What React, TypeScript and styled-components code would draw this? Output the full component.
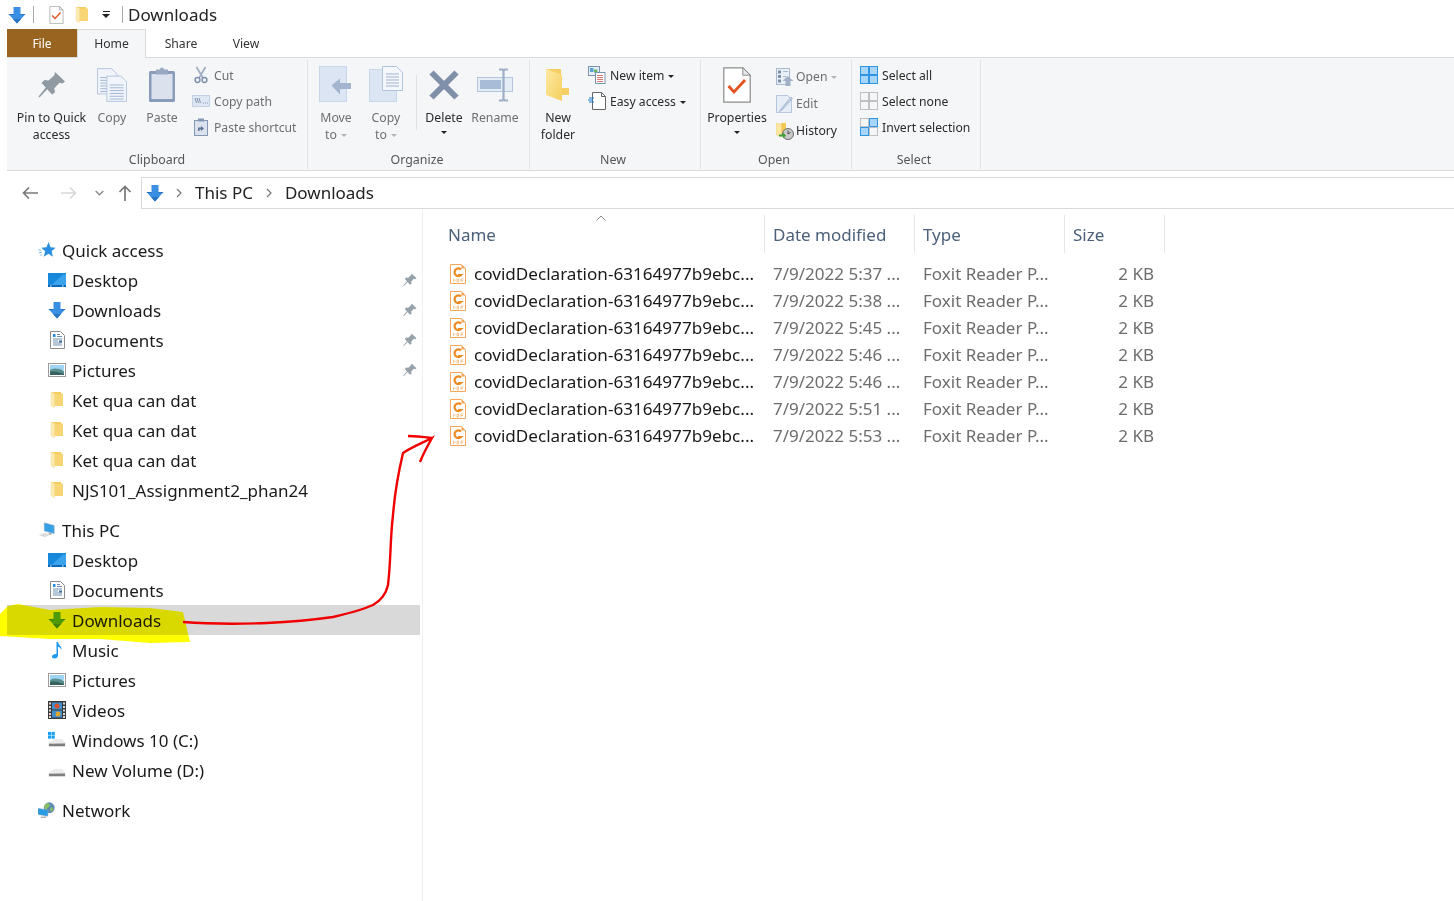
import React, { useId } from "react";
import styled, { createGlobalStyle } from "styled-components";

const GlobalStyle = createGlobalStyle`
  html, body {
    margin: 0;
    padding: 0;
    height: 100%;
    overflow: hidden;
    background: #fff;
  }
  body {
    font-family: "Noto Sans", "Open Sans", "Liberation Sans", sans-serif;
    color: #1a1a1a;
  }
`;

const Window = styled.div`
  position: relative;
  width: 1454px;
  height: 901px;
  padding-left: 7px;
  box-sizing: border-box;
  overflow: hidden;
  background: #fff;
`;

/* title bar */
const TitleBar = styled.div`
  height: 29px;
  display: flex;
  align-items: center;
  padding-left: 1px;
`;
const TitleSep = styled.span<{ $ml: number }>`
  width: 1px;
  height: 17px;
  margin-left: ${(p) => p.$ml}px;
  background: #a8a8a8;
`;
const TitleIcon = styled.span<{ $ml: number }>`
  display: flex;
  margin-left: ${(p) => p.$ml}px;
`;
const TitleText = styled.span`
  margin-left: 5px;
  font-size: 17px;
  color: #222;
`;
const QuickCaret = styled.span`
  display: flex;
  flex-direction: column;
  align-items: center;
  gap: 2px;
  margin-left: 13px;
  &::before {
    content: "";
    width: 7px;
    height: 1px;
    background: #222;
  }
  &::after {
    content: "";
    border-left: 4px solid transparent;
    border-right: 4px solid transparent;
    border-top: 4px solid #222;
  }
`;

/* tabs */
const TabStrip = styled.div`
  height: 28px;
  display: flex;
  border-bottom: 1px solid #dadbdc;
`;
const FileTab = styled.div`
  width: 70px;
  display: flex;
  align-items: center;
  justify-content: center;
  background: #99641f;
  color: #fff;
  font-size: 12px;
`;
const Tab = styled.div<{ $active?: boolean; $width: number }>`
  width: ${(p) => p.$width}px;
  height: ${(p) => (p.$active ? 29 : 28)}px;
  display: flex;
  align-items: center;
  justify-content: center;
  box-sizing: border-box;
  font-size: 12.2px;
  color: #333;
  background: #fff;
  ${(p) =>
    p.$active &&
    `border: 1px solid #dadbdc; border-bottom: none; background: #f5f6f7; padding-bottom: 2px;`}
`;

/* ribbon */
const Ribbon = styled.div`
  height: 112px;
  display: flex;
  background: #f5f6f7;
  border-bottom: 1px solid #dadbdc;
`;
const RibbonGroup = styled.div<{ $width: number }>`
  width: ${(p) => p.$width}px;
  display: flex;
  flex-direction: column;
  box-sizing: border-box;
  margin: 2px 0 1px;
  border-right: 1px solid #e2e3e5;
`;
const GroupBody = styled.div<{ $pl: number }>`
  flex: 1;
  display: flex;
  padding: 1px 0 0 ${(p) => p.$pl}px;
`;
const GroupLabel = styled.div<{ $pr?: number }>`
  height: 21px;
  box-sizing: border-box;
  padding: 2px ${(p) => p.$pr ?? 0}px 0 0;
  line-height: 20px;
  text-align: center;
  font-size: 12.4px;
  color: #555;
`;
const LargeButton = styled.div<{ $width: number; $disabled?: boolean }>`
  width: ${(p) => p.$width}px;
  display: flex;
  flex-direction: column;
  align-items: center;
  color: ${(p) => (p.$disabled ? "#6f6f6f" : "#2b2b2b")};
`;
const LargeIcon = styled.div`
  height: 48px;
  display: flex;
  align-items: center;
  justify-content: center;
`;
const LargeLabel = styled.div`
  font-size: 12.3px;
  line-height: 17px;
  text-align: center;
  white-space: nowrap;
`;
const Caret = styled.span<{ $disabled?: boolean }>`
  display: inline-block;
  margin-left: 4px;
  vertical-align: 2px;
  border-left: 3.5px solid transparent;
  border-right: 3.5px solid transparent;
  border-top: 3.5px solid ${(p) => (p.$disabled ? "#b4b4b4" : "#222")};
`;
const BelowCaret = styled(Caret)`
  display: block;
  margin: 5px 0 0;
`;
const SmallColumn = styled.div<{ $ml: number; $rowHeight: number; $pt?: number }>`
  margin-left: ${(p) => p.$ml}px;
  padding-top: ${(p) => p.$pt ?? 1}px;
  display: grid;
  grid-auto-rows: ${(p) => p.$rowHeight}px;
  align-content: start;
`;
const SmallItem = styled.div<{ $disabled?: boolean; $gap: number }>`
  display: flex;
  align-items: center;
  gap: ${(p) => p.$gap}px;
  font-size: 12.2px;
  white-space: nowrap;
  color: ${(p) => (p.$disabled ? "#6f6f6f" : "#2b2b2b")};
`;
const SmallIconBox = styled.span`
  width: 18px;
  height: 18px;
  display: flex;
  align-items: center;
  justify-content: center;
  flex: none;
`;
const GroupDivider = styled.div`
  width: 1px;
  height: 55px;
  margin: 14px 1px 0 5px;
  background: #e0e1e3;
`;

/* address bar */
const AddressRow = styled.div`
  height: 32px;
  margin-top: 6px;
  display: flex;
  align-items: center;
`;
const NavArrows = styled.div`
  width: 134px;
  height: 100%;
  display: flex;
  align-items: center;
  padding-left: 15px;
  box-sizing: border-box;
`;
const NavArrowSlot = styled.span<{ $ml: number }>`
  display: flex;
  margin-left: ${(p) => p.$ml}px;
`;
const AddressBox = styled.div`
  flex: 1;
  height: 100%;
  display: flex;
  align-items: center;
  box-sizing: border-box;
  border: 1px solid #d9d9d9;
  border-right: none;
  padding: 0 0 1px 4px;
  font-size: 17px;
  color: #222;
`;
const Crumb = styled.span<{ $ml: number }>`
  margin-left: ${(p) => p.$ml}px;
  display: flex;
`;

/* main area */
const Main = styled.div`
  display: flex;
  height: 692px;
`;
const NavPane = styled.nav`
  width: 416px;
  box-sizing: border-box;
  padding: 26px 2px 0 0;
  border-right: 1px solid #f0f0f0;
`;
const NavGroup = styled.div`
  margin-bottom: 10px;
`;
const NavRow = styled.div<{ $top?: boolean; $selected?: boolean }>`
  height: 30px;
  display: flex;
  align-items: center;
  gap: 6px;
  padding-left: ${(p) => (p.$top ? 31 : 41)}px;
  padding-right: 3px;
  font-size: 17px;
  color: #1a1a1a;
  background: ${(p) => (p.$selected ? "#d9d9d9" : "transparent")};
`;
const NavIcon = styled.span`
  width: 18px;
  height: 18px;
  display: flex;
  align-items: center;
  justify-content: center;
  flex: none;
`;
const NavPin = styled.span`
  margin-left: auto;
  display: flex;
`;

const FilePane = styled.section`
  flex: 1;
  padding: 6px 0 0 17px;
`;
const Columns = "325px 150px 150px 100px";
const HeaderRow = styled.div`
  position: relative;
  display: grid;
  grid-template-columns: ${Columns};
  height: 38px;
  margin-bottom: 7px;
`;
const HeaderCell = styled.div`
  display: flex;
  align-items: center;
  padding-left: 8px;
  box-sizing: border-box;
  border-right: 1px solid #e5e5e5;
  font-size: 17px;
  color: #4c607a;
`;
const SortMark = styled.span`
  position: absolute;
  left: 156px;
  top: 0;
  display: flex;
`;
const FileRow = styled.div`
  display: grid;
  grid-template-columns: ${Columns};
  height: 27px;
  align-items: center;
  font-size: 17px;
  white-space: nowrap;
`;
const NameCell = styled.div`
  display: flex;
  align-items: center;
  gap: 8px;
  padding-left: 10px;
  color: #1a1a1a;
  font-size: 17.1px;
`;
const DetailCell = styled.div<{ $right?: boolean }>`
  padding: 0 11px 0 8px;
  color: #6d6d6d;
  text-align: ${(p) => (p.$right ? "right" : "left")};
`;

/* annotations drawn over the screenshot */
const Highlight = styled.svg`
  position: absolute;
  left: 0;
  top: 0;
  pointer-events: none;
  mix-blend-mode: multiply;
`;
const Ink = styled.svg`
  position: absolute;
  left: 0;
  top: 0;
  pointer-events: none;
`;

/* ---- icons ---- */
const ArrowDownIcon = ({ color, shade }: { color: string; shade: string }) => (
  <svg width="18" height="18" viewBox="0 0 18 18">
    <path d="M5.5 1h7v7H17.500L9 17.500.5 8h5z" fill={color} />
    <path d="M.5 8h5v1H1.400zM12.500 8h5l-.9 1H12.500z M9 17.500 5 13h8z" fill={shade} />
  </svg>
);

const FolderIcon = () => (
  <svg width="14" height="18" viewBox="0 0 14 18">
    <path d="M1 1h5l1.500 1.500h5.500V15H1z" fill="#f8d675" />
    <path d="M1 1h10v2H1z" fill="#f5cd5e" />
    <path d="M1 1l3.500 1.500V17L1 15z" fill="#fdeab0" stroke="#f0dca0" strokeWidth=".4" />
  </svg>
);

const CheckDocIcon = ({ w, h }: { w: number; h: number }) => (
  <svg width={w} height={h} viewBox="0 0 28 36">
    <path d="M.8.8h19l7.400 7.400v27H.8z" fill="#fff" stroke="#8a8a8a" strokeWidth="1.200" />
    <path d="M19.800.8v7.400h7.400z" fill="#e8e8e8" stroke="#8a8a8a" strokeWidth="1" />
    <path d="M5.500 19l5.500 6 11-12" fill="none" stroke="#e2531f" strokeWidth="2.800" />
  </svg>
);

const PIN_PATH =
  "M17 1l10 9.500-2.500 2-3-.8-5.200 5.600.7 4L14 23.500 9.200 18.200 1.500 26.500.5 25.500l7.300-9L3.500 12 6.500 9l4 .6 5.800-5.400z";

const PinLarge = () => (
  <svg width="28" height="28" viewBox="0 0 28 28">
    <path d={PIN_PATH} fill="#8f9aa3" />
  </svg>
);

const PinSmall = () => (
  <svg width="14" height="14" viewBox="0 0 28 28">
    <path d={PIN_PATH} fill="#97a1aa" />
  </svg>
);

const Page = ({ x, y, w, h }: { x: number; y: number; w: number; h: number }) => (
  <g>
    <path
      d={`M${x} ${y}h${w - 6}l6 6v${h - 6}h-${w}z`}
      fill="#f1f5fb"
      stroke="#b2c3dd"
      strokeWidth="1"
    />
    {[0, 1, 2, 3, 4, 5, 6].map((i) =>
      y + 9 + i * 3 < y + h - 1 ? (
        <rect key={i} x={x + 3} y={y + 9 + i * 3} width={w - 6} height="1" fill="#9fb3d1" />
      ) : null,
    )}
  </g>
);

const CopyLarge = () => (
  <svg width="30" height="36" viewBox="0 0 32 36">
    <Page x={0.5} y={0.5} w={21} h={27} />
    <Page x={10.5} y={8.5} w={21} h={27} />
  </svg>
);

const PasteLarge = () => (
  <svg width="28" height="36" viewBox="0 0 28 36">
    <rect x="1" y="4" width="26" height="31" rx="1.500" fill="#8a9cbb" />
    <rect x="3.500" y="7" width="21" height="25" fill="#dbe2ee" />
    <rect x="8" y="2.500" width="12" height="5" fill="#9aa9c2" />
    <circle cx="14" cy="2.500" r="2" fill="#9aa9c2" />
  </svg>
);

const ScissorsIcon = () => (
  <svg width="14" height="18" viewBox="0 0 14 18">
    <path d="M2.500 1l6.500 11M11.500 1L5 12" stroke="#a3b0c4" strokeWidth="1.800" fill="none" />
    <circle cx="3.500" cy="14" r="2.400" fill="none" stroke="#7f92b0" strokeWidth="1.500" />
    <circle cx="10.500" cy="14" r="2.400" fill="none" stroke="#7f92b0" strokeWidth="1.500" />
  </svg>
);

const CopyPathIcon = () => (
  <svg width="18" height="12" viewBox="0 0 18 12">
    <rect x=".5" y=".5" width="17" height="11" fill="#dde6f3" stroke="#c3d1e6" />
    <path d="M3 3l1.500 5M5 3l1.500 5M7 3l1.500 5" stroke="#6c7f9e" strokeWidth=".8" />
    <path d="M11 8h.9M13 8h.9M15 8h.9" stroke="#8395b2" strokeWidth="1" />
  </svg>
);

const PasteShortcutIcon = () => (
  <svg width="14" height="18" viewBox="0 0 14 18">
    <rect x=".5" y="2.500" width="13" height="15" fill="#dbe2ee" stroke="#8496b6" />
    <rect x="4" y=".5" width="6" height="3" fill="#8496b6" />
    <path d="M4 13V9.500h3V8l3 2.500L7 13v-1.500H5.500V13z" fill="#5e7396" />
  </svg>
);

const MoveToIcon = () => (
  <svg width="34" height="38" viewBox="0 0 34 38">
    <rect x=".5" y=".5" width="27" height="35" fill="#dbe5f3" stroke="#c9d6e9" />
    <path d="M12.500 19.500 21 12.500v4.500H32v6H21v5.500z" fill="#a3b4ce" />
  </svg>
);

const CopyToIcon = () => (
  <svg width="34" height="38" viewBox="0 0 34 38">
    <rect x=".5" y="3.500" width="27" height="32" fill="#dbe5f3" stroke="#c9d6e9" />
    <path d="M13.500.5h14l6 6v18h-20z" fill="#f4f7fb" stroke="#b2c3dd" />
    <path d="M17 8h13M17 11h13M17 14h13M17 17h13M17 20h13" stroke="#9fb3d1" />
  </svg>
);

const DeleteIcon = () => (
  <svg width="32" height="32" viewBox="0 0 32 32">
    <path d="M3.500 3.500l25 25M28.500 3.500l-25 25" stroke="#8090aa" strokeWidth="6" />
  </svg>
);

const RenameIcon = () => (
  <svg width="36" height="34" viewBox="0 0 36 34">
    <rect x=".5" y="9.500" width="35" height="14" fill="#e4ecf6" stroke="#b4c5dd" />
    <rect x="3" y="12" width="21" height="9" fill="#a9bcd7" />
    <path d="M22 1.500h3.500l1 1.500 1-1.500H31M22 32.500h3.500l1-1.500 1 1.500H31M26.500 3v28" fill="none" stroke="#9eafc9" strokeWidth="2.200" />
  </svg>
);

const NewFolderIcon = () => {
  const id = useId();
  return (
    <svg width="26" height="34" viewBox="0 0 26 34">
      <defs>
        <linearGradient id={id} x1="0" y1="0" x2="1" y2="1">
          <stop offset="0" stopColor="#fdeaa5" />
          <stop offset="1" stopColor="#f6cf5c" />
        </linearGradient>
      </defs>
      <path d="M2 1h14v19h8v7H2z" fill="#f5cf63" />
      <path d="M1 1l16 6v26L1 27z" fill={`url(#${id})`} />
    </svg>
  );
};

const NewItemIcon = () => (
  <svg width="18" height="18" viewBox="0 0 18 18">
    <rect x=".5" y=".5" width="11" height="9" fill="#e8eef6" stroke="#7e93ad" />
    <rect x="2" y="2" width="3.500" height="4" fill="#5aa4dc" />
    <rect x="6" y="3.500" width="3.500" height="3" fill="#6fb36c" />
    <rect x="7.500" y="6.500" width="9.500" height="11" fill="#fff" stroke="#7e93ad" />
    <path d="M9 9.500h6M9 11.500h6M9 13.500h6M9 15.500h6" stroke="#d2574f" strokeWidth=".8" />
  </svg>
);

const EasyAccessIcon = () => (
  <svg width="18" height="18" viewBox="0 0 18 18">
    <path d="M4.500.5h9l4 4v13h-13z" fill="#fff" stroke="#666" />
    <path d="M13.500.5v4h4" fill="none" stroke="#666" />
    <path d="M1 6h5M0 8h5M1 10h5" stroke="#1d7fd1" />
  </svg>
);

const OpenIcon = () => (
  <svg width="18" height="18" viewBox="0 0 18 18">
    <rect x=".5" y=".5" width="13" height="16" fill="#eaf0f8" stroke="#a9b7cc" />
    <rect x="2" y="2.500" width="3" height="3" fill="#7e8fa8" />
    <rect x="2" y="7" width="3" height="3" fill="#7e8fa8" />
    <rect x="2" y="11.500" width="3" height="3" fill="#7e8fa8" />
    <path d="M7 3.500h5M7 8.500h3" stroke="#a9b7cc" />
    <path d="M11.500 8l6 5h-3v5h-5v-5h-3z" fill="#a2b1c8" />
  </svg>
);

const EditIcon = () => (
  <svg width="18" height="18" viewBox="0 0 18 18">
    <path d="M.5.500h11l4 4V17.500H.5z" fill="#e6edf6" stroke="#b4c5dd" />
    <path d="M15 2L5 14l-1.500 2.500L6 15 16.500 3.500z" fill="#c2d1e6" stroke="#98abc8" strokeWidth=".7" />
  </svg>
);

const HistoryIcon = () => (
  <svg width="18" height="18" viewBox="0 0 18 18">
    <path d="M5 1h5v11H5z" fill="#f3c94f" />
    <path d="M.5 1l5 1.500V15l-5-2z" fill="#fde79d" stroke="#eed07c" strokeWidth=".5" />
    <circle cx="12" cy="12" r="5.500" fill="#c9c9c9" stroke="#6d6d6d" />
    <path d="M12 8.500V12l2.500-1.500" fill="none" stroke="#444" />
    <path d="M3 12.500h4v-2l3 3-3 3v-2H3z" fill="#3aa233" />
  </svg>
);

const GridIcon = ({ cells }: { cells: boolean[] }) => {
  const at = [
    [0.5, 0.5],
    [9.5, 0.5],
    [0.5, 9.5],
    [9.5, 9.5],
  ];
  return (
    <svg width="18" height="18" viewBox="0 0 18 18">
      {at.map(([x, y], i) => (
        <rect
          key={i}
          x={x}
          y={y}
          width="8"
          height="8"
          fill={cells[i] ? "#a9d6f8" : "transparent"}
          stroke={cells[i] ? "#2f96e6" : "#c0c0c0"}
        />
      ))}
    </svg>
  );
};

const StarIcon = () => (
  <svg width="18" height="18" viewBox="0 0 18 18">
    <path d="M10.500 1l2 5.300 5 .4-3.900 3.500 1.300 5.500-4.400-2.900-4.700 2.900 1.400-5.500-3.900-3.500 5.200-.4z" fill="#2a8fe0" />
    <path d="M0 9h3M1 11.500h3M2 14h2" stroke="#7dbcee" strokeWidth=".9" />
  </svg>
);

const DesktopIcon = () => (
  <svg width="18" height="14" viewBox="0 0 18 14">
    <rect width="18" height="14" fill="#1689dc" />
    <path d="M3 12.500 15 1.500h3v11z" fill="#3ba3ec" />
    <rect x="0" y="12" width="18" height="2" fill="#0a68b8" />
    <rect x="14" y="12.500" width="1.500" height="1" fill="#fff" />
    <rect x="2" y="12.500" width="1.500" height="1" fill="#fff" />
  </svg>
);

const DocumentsIcon = () => (
  <svg width="15" height="18" viewBox="0 0 15 18">
    <path d="M.5.500h10l4 4v13H.5z" fill="#fff" stroke="#8c8c8c" />
    <path d="M3 3h2.500v3H3z" fill="#2a8fe0" />
    <path d="M7 3.500h3M7 5.500h5M3 8h9M3 10h5M3 12h9M3 14h9" stroke="#6e8fb4" />
    <rect x="9" y="9.500" width="3" height="2" fill="#3f6f9e" />
  </svg>
);

const PicturesIcon = () => (
  <svg width="18" height="14" viewBox="0 0 18 14">
    <rect x=".5" y=".5" width="17" height="13" fill="#fff" stroke="#9a9a9a" />
    <rect x="2" y="2" width="14" height="5" fill="#9fd4f5" />
    <path d="M2 7c4-2 8-2 14 1v4H2z" fill="#5a8f8f" />
    <path d="M2 9c5-1 9 0 14 2v1H2z" fill="#37635f" />
  </svg>
);

const MusicIcon = () => (
  <svg width="14" height="18" viewBox="0 0 14 18">
    <path d="M6.500 1h1.500c.3 3 4 4 3.500 8-.8-2-2.300-3-3.500-3.200V14.500c0 1.900-1.600 3-3.600 3C2.800 17.500 2 16.600 2 15.500c0-1.500 1.800-2.700 4.500-2.600z" fill="#1d9bf0" />
  </svg>
);

const VideosIcon = () => (
  <svg width="18" height="18" viewBox="0 0 18 18">
    <rect width="18" height="18" fill="#3a3a3a" />
    {[1.5, 5, 8.5, 12, 15].map((y) => (
      <React.Fragment key={y}>
        <rect x="1" y={y} width="2" height="2" fill="#ddd" />
        <rect x="15" y={y} width="2" height="2" fill="#ddd" />
      </React.Fragment>
    ))}
    <rect x="4" y="1.500" width="10" height="7" fill="#3f8fd0" />
    <rect x="4" y="9.500" width="10" height="7" fill="#3f8fd0" />
    <circle cx="9" cy="5" r="2.500" fill="#d6532f" />
    <circle cx="10" cy="13" r="2.500" fill="#e0a52c" />
  </svg>
);

const DriveIcon = ({ windows }: { windows?: boolean }) => (
  <svg width="20" height="18" viewBox="0 0 20 18">
    <path d="M1 12l6-4h8l4 4v4H1z" fill="#e2e2e2" />
    <path d="M1 13l18-.5V16H1z" fill="#7f7f7f" />
    <path d="M1 13 7 8h8l4 4.500z" fill="#ececec" />
    {windows && (
      <g fill="#1aa0ee">
        <rect x="0" y="0" width="3.500" height="3.500" />
        <rect x="4" y="0" width="3.500" height="3.500" />
        <rect x="0" y="4" width="3.500" height="3.500" />
        <rect x="4" y="4" width="3.500" height="3.500" />
      </g>
    )}
  </svg>
);

const ThisPcIcon = () => (
  <svg width="20" height="18" viewBox="0 0 20 18">
    <path d="M7 1l11 3v9L7 10z" fill="#35a2e8" stroke="#8fa8bd" strokeWidth=".6" />
    <path d="M1 15l6-3 7 2-6 3z" fill="#dcdcdc" />
    <path d="M12 12l3 1v1.500l-3-1z" fill="#9a9a9a" />
  </svg>
);

const NetworkIcon = () => (
  <svg width="20" height="18" viewBox="0 0 20 18">
    <circle cx="12.500" cy="6.500" r="6" fill="#5f8cb3" />
    <path d="M9 2c2-1 4 0 4 2s-3 2-3 4-3 0-3-2 1-3 2-4zM15 6c1 0 2 1 2 2s-2 3-3 2 0-4 1-4z" fill="#8cbf62" />
    <path d="M0 7l11 2v7L0 14z" fill="#2a9be5" stroke="#8fa8bd" strokeWidth=".5" />
    <path d="M3 17h6" stroke="#9a9a9a" strokeWidth="1.200" />
  </svg>
);

const PdfIcon = () => (
  <svg width="16" height="20" viewBox="0 0 16 20">
    <path d="M.5.500h11l4 4v15H.5z" fill="#fff" stroke="#f4a65a" />
    <path d="M11.500.5v4h4z" fill="#f4a65a" />
    <path d="M11 5.500A3.800 3.800 0 1 0 11 11H8" fill="none" stroke="#ee8a1f" strokeWidth="2.200" />
    <path d="M3.500 15v3M5 15.500v1.500M7 15v3h1.500v-3zM11 15v3M11 15h2.500M11 16.500h2" stroke="#f4b87a" strokeWidth=".8" fill="none" />
  </svg>
);

const BackArrow = ({ color, flip }: { color: string; flip?: boolean }) => (
  <svg width="16" height="14" viewBox="0 0 16 14" style={flip ? { transform: "scaleX(-1)" } : undefined}>
    <path d="M7 1.500 1.500 7 7 12.500M1.500 7H16" fill="none" stroke={color} strokeWidth="1.700" />
  </svg>
);

const UpArrow = () => (
  <svg width="14" height="16" viewBox="0 0 14 16">
    <path d="M1.500 7 7 1.500 12.500 7M7 1.500V16" fill="none" stroke="#777" strokeWidth="1.700" />
  </svg>
);

const ChevronDown = () => (
  <svg width="9" height="6" viewBox="0 0 9 6">
    <path d="M.7 1l3.800 3.800L8.300 1" fill="none" stroke="#8a8a8a" strokeWidth="1.400" />
  </svg>
);

const ChevronRight = () => (
  <svg width="6" height="10" viewBox="0 0 6 10">
    <path d="M1 1l4 4-4 4" fill="none" stroke="#777" strokeWidth="1.200" />
  </svg>
);

const SortUp = () => (
  <svg width="10" height="6" viewBox="0 0 10 6">
    <path d="M.5 5.500 5 1l4.500 4.500" fill="none" stroke="#8a8a8a" />
  </svg>
);

/* ---- data ---- */
const BLUE = <ArrowDownIcon color="#3a8fe2" shade="#2a74c4" />;
const GREEN = <ArrowDownIcon color="#4f9a10" shade="#3f8206" />;

type NavEntry = { label: string; icon: React.ReactNode; pinned?: boolean; selected?: boolean };

const quickAccess: NavEntry[] = [
  { label: "Desktop", icon: <DesktopIcon />, pinned: true },
  { label: "Downloads", icon: BLUE, pinned: true },
  { label: "Documents", icon: <DocumentsIcon />, pinned: true },
  { label: "Pictures", icon: <PicturesIcon />, pinned: true },
  { label: "Ket qua can dat", icon: <FolderIcon /> },
  { label: "Ket qua can dat", icon: <FolderIcon /> },
  { label: "Ket qua can dat", icon: <FolderIcon /> },
  { label: "NJS101_Assignment2_phan24", icon: <FolderIcon /> },
];

const thisPc: NavEntry[] = [
  { label: "Desktop", icon: <DesktopIcon /> },
  { label: "Documents", icon: <DocumentsIcon /> },
  { label: "Downloads", icon: GREEN, selected: true },
  { label: "Music", icon: <MusicIcon /> },
  { label: "Pictures", icon: <PicturesIcon /> },
  { label: "Videos", icon: <VideosIcon /> },
  { label: "Windows 10 (C:)", icon: <DriveIcon windows /> },
  { label: "New Volume (D:)", icon: <DriveIcon /> },
];

const modified = ["5:37", "5:38", "5:45", "5:46", "5:46", "5:51", "5:53"];

const NavEntries = ({ items }: { items: NavEntry[] }) => (
  <>
    {items.map((item, i) => (
      <NavRow key={i} $selected={item.selected}>
        <NavIcon>{item.icon}</NavIcon>
        {item.label}
        {item.pinned && (
          <NavPin>
            <PinSmall />
          </NavPin>
        )}
      </NavRow>
    ))}
  </>
);

const Small = ({
  icon,
  label,
  disabled,
  gap = 4,
  caret,
}: {
  icon: React.ReactNode;
  label: string;
  disabled?: boolean;
  gap?: number;
  caret?: boolean;
}) => (
  <SmallItem $disabled={disabled} $gap={gap}>
    <SmallIconBox>{icon}</SmallIconBox>
    <span>
      {label}
      {caret && <Caret $disabled={disabled} />}
    </span>
  </SmallItem>
);

const App = () => {
  return (
    <Window>
      <GlobalStyle />
      <TitleBar>
        {BLUE}
        <TitleSep $ml={7} />
        <TitleIcon $ml={15}>
          <CheckDocIcon w={15} h={18} />
        </TitleIcon>
        <TitleIcon $ml={11}>
          <FolderIcon />
        </TitleIcon>
        <QuickCaret />
        <TitleSep $ml={12} />
        <TitleText>Downloads</TitleText>
      </TitleBar>

      <TabStrip>
        <FileTab>File</FileTab>
        <Tab $active $width={69}>Home</Tab>
        <Tab $width={70}>Share</Tab>
        <Tab $width={60}>View</Tab>
      </TabStrip>

      <Ribbon>
        <RibbonGroup $width={301}>
          <GroupBody $pl={8}>
            <LargeButton $width={73}>
              <LargeIcon>
                <PinLarge />
              </LargeIcon>
              <LargeLabel>
                Pin to Quick
                <br />
                access
              </LargeLabel>
            </LargeButton>
            <LargeButton $width={48} $disabled>
              <LargeIcon>
                <CopyLarge />
              </LargeIcon>
              <LargeLabel>Copy</LargeLabel>
            </LargeButton>
            <LargeButton $width={52} $disabled>
              <LargeIcon>
                <PasteLarge />
              </LargeIcon>
              <LargeLabel>Paste</LargeLabel>
            </LargeButton>
            <SmallColumn $ml={4} $rowHeight={26}>
              <Small icon={<ScissorsIcon />} label="Cut" disabled />
              <Small icon={<CopyPathIcon />} label="Copy path" disabled />
              <Small icon={<PasteShortcutIcon />} label="Paste shortcut" disabled />
            </SmallColumn>
          </GroupBody>
          <GroupLabel>Clipboard</GroupLabel>
        </RibbonGroup>

        <RibbonGroup $width={222}>
          <GroupBody $pl={3}>
            <LargeButton $width={50} $disabled>
              <LargeIcon>
                <MoveToIcon />
              </LargeIcon>
              <LargeLabel>
                Move
                <br />
                to
                <Caret $disabled />
              </LargeLabel>
            </LargeButton>
            <LargeButton $width={50} $disabled>
              <LargeIcon>
                <CopyToIcon />
              </LargeIcon>
              <LargeLabel>
                Copy
                <br />
                to
                <Caret $disabled />
              </LargeLabel>
            </LargeButton>
            <GroupDivider />
            <LargeButton $width={52}>
              <LargeIcon>
                <DeleteIcon />
              </LargeIcon>
              <LargeLabel>Delete</LargeLabel>
              <BelowCaret />
            </LargeButton>
            <LargeButton $width={50} $disabled>
              <LargeIcon>
                <RenameIcon />
              </LargeIcon>
              <LargeLabel>Rename</LargeLabel>
            </LargeButton>
          </GroupBody>
          <GroupLabel $pr={3}>Organize</GroupLabel>
        </RibbonGroup>

        <RibbonGroup $width={171}>
          <GroupBody $pl={0}>
            <LargeButton $width={56}>
              <LargeIcon>
                <NewFolderIcon />
              </LargeIcon>
              <LargeLabel>
                New
                <br />
                folder
              </LargeLabel>
            </LargeButton>
            <SmallColumn $ml={2} $rowHeight={26}>
              <Small icon={<NewItemIcon />} label="New item" caret />
              <Small icon={<EasyAccessIcon />} label="Easy access" caret />
            </SmallColumn>
          </GroupBody>
          <GroupLabel $pr={4}>New</GroupLabel>
        </RibbonGroup>

        <RibbonGroup $width={151}>
          <GroupBody $pl={2}>
            <LargeButton $width={68}>
              <LargeIcon>
                <CheckDocIcon w={28} h={36} />
              </LargeIcon>
              <LargeLabel>Properties</LargeLabel>
              <BelowCaret />
            </LargeButton>
            <SmallColumn $ml={5} $rowHeight={27} $pt={2}>
              <Small icon={<OpenIcon />} label="Open" disabled gap={2} caret />
              <Small icon={<EditIcon />} label="Edit" disabled gap={2} />
              <Small icon={<HistoryIcon />} label="History" gap={2} />
            </SmallColumn>
          </GroupBody>
          <GroupLabel $pr={4}>Open</GroupLabel>
        </RibbonGroup>

        <RibbonGroup $width={129}>
          <GroupBody $pl={8}>
            <SmallColumn $ml={0} $rowHeight={26}>
              <Small icon={<GridIcon cells={[true, true, true, true]} />} label="Select all" />
              <Small icon={<GridIcon cells={[false, false, false, false]} />} label="Select none" />
              <Small icon={<GridIcon cells={[false, true, true, false]} />} label="Invert selection" />
            </SmallColumn>
          </GroupBody>
          <GroupLabel $pr={4}>Select</GroupLabel>
        </RibbonGroup>
      </Ribbon>

      <AddressRow>
        <NavArrows>
          <NavArrowSlot $ml={0}>
            <BackArrow color="#7a7a7a" />
          </NavArrowSlot>
          <NavArrowSlot $ml={23}>
            <BackArrow color="#d8d8d8" flip />
          </NavArrowSlot>
          <NavArrowSlot $ml={18}>
            <ChevronDown />
          </NavArrowSlot>
          <NavArrowSlot $ml={14}>
            <UpArrow />
          </NavArrowSlot>
        </NavArrows>
        <AddressBox>
          {BLUE}
          <Crumb $ml={12}>
            <ChevronRight />
          </Crumb>
          <Crumb $ml={13}>This PC</Crumb>
          <Crumb $ml={13}>
            <ChevronRight />
          </Crumb>
          <Crumb $ml={13}>Downloads</Crumb>
        </AddressBox>
      </AddressRow>

      <Main>
        <NavPane>
          <NavGroup>
            <NavRow $top>
              <NavIcon>
                <StarIcon />
              </NavIcon>
              Quick access
            </NavRow>
            <NavEntries items={quickAccess} />
          </NavGroup>
          <NavGroup>
            <NavRow $top>
              <NavIcon>
                <ThisPcIcon />
              </NavIcon>
              This PC
            </NavRow>
            <NavEntries items={thisPc} />
          </NavGroup>
          <NavGroup>
            <NavRow $top>
              <NavIcon>
                <NetworkIcon />
              </NavIcon>
              Network
            </NavRow>
          </NavGroup>
        </NavPane>

        <FilePane>
          <HeaderRow>
            <HeaderCell>Name</HeaderCell>
            <HeaderCell>Date modified</HeaderCell>
            <HeaderCell>Type</HeaderCell>
            <HeaderCell>Size</HeaderCell>
            <SortMark>
              <SortUp />
            </SortMark>
          </HeaderRow>
          {modified.map((time, i) => (
            <FileRow key={i}>
              <NameCell>
                <PdfIcon />
                covidDeclaration-63164977b9ebc...
              </NameCell>
              <DetailCell>7/9/2022 {time} ...</DetailCell>
              <DetailCell>Foxit Reader P...</DetailCell>
              <DetailCell $right>2 KB</DetailCell>
            </FileRow>
          ))}
        </FilePane>
      </Main>

      <Highlight width="1454" height="901" viewBox="0 0 1454 901">
        <path
          d="M0 614 8 606 18 604 50 610 100 607 150 608 183 612 190 642 150 643 100 639 50 639 0 636z"
          fill="#ffff00"
        />
      </Highlight>
      <Ink width="1454" height="901" viewBox="0 0 1454 901">
        <path
          d="M183 622C210 624 240 624 267 623 290 622 312 620 333 617 350 613 362 610 373 605 382 600 386 594 388 585 391 560 390 540 393 515 395 490 399 470 403 453 412 447 422 443 432 438 428 445 424 452 420 462M408 436C416 436 424 437 432 438"
          fill="none"
          stroke="#f00000"
          strokeWidth="2.400"
        />
      </Ink>
    </Window>
  );
};

export default App;
